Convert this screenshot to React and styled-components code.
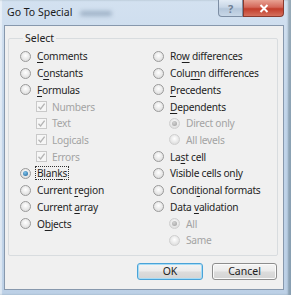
import React from "react";
import styled, { createGlobalStyle } from "styled-components";

const Global = createGlobalStyle`
  html, body { margin: 0; padding: 0; background: #2f4a4c; }
  * { box-sizing: border-box; }
`;

const Window = styled.div`
  width: 291px;
  height: 295px;
  display: flex;
  flex-direction: column;
  background: linear-gradient(180deg, #d3e1f0 0%, #c2d5ea 40%, #bcd0e6 100%);
  box-shadow: inset -3px 0 2px rgba(40, 70, 80, 0.35), inset 2px 0 1px rgba(255, 255, 255, 0.5);
  font-family: "Noto Sans", "Open Sans", sans-serif;
`;

const TitleBar = styled.div`
  height: 24px;
  display: flex;
  align-items: flex-start;
  padding-left: 7px;
`;

const Title = styled.div`
  font-size: 10.5px;
  line-height: 24px;
  color: #1b1b1b;
  flex: 1;
  display: flex;
  align-items: center;
  gap: 8px;
`;

const BlurredName = styled.span`
  width: 32px;
  height: 5px;
  margin-top: 3px;
  border-radius: 3px;
  background: #9eb1c6;
  filter: blur(2px);
`;

const Controls = styled.div`
  display: flex;
  margin-right: 7px;
`;

const CtrlButton = styled.div`
  width: ${(p) => p.$w}px;
  height: 17px;
  display: flex;
  align-items: center;
  justify-content: center;
  border: 1px solid ${(p) => (p.$close ? "#8a3a2e" : "#7d8ea4")};
  border-top: none;
  border-radius: ${(p) => (p.$close ? "0 0 4px 0" : "0 0 0 4px")};
  background: ${(p) =>
    p.$close
      ? "linear-gradient(180deg, #e8a293 0%, #d4685a 45%, #c23d2b 55%, #d5705d 100%)"
      : "linear-gradient(180deg, #e2ebf5 0%, #c8d6e6 45%, #b4c6da 55%, #c8d7e7 100%)"};
  color: ${(p) => (p.$close ? "#fff" : "#6f8095")};
  font-size: 11px;
  font-weight: 700;
`;

const Client = styled.div`
  flex: 1;
  margin: 1px 7px 5px 4px;
  border: 1px solid #8798ad;
  background: #f0f0f0;
  display: flex;
  flex-direction: column;
`;

const Group = styled.fieldset`
  margin: 5px 5px 0 3px;
  padding: 3px 0 6px 11px;
  border: 1px solid #d8dcdf;
  border-radius: 2px;
  min-width: 0;
`;

const Legend = styled.legend`
  margin-left: 3px;
  padding: 0 2px;
  font-size: 10.5px;
  line-height: 14px;
  color: #222;
`;

const Columns = styled.div`
  display: grid;
  grid-template-columns: 133px 1fr;
`;

const Column = styled.div`
  display: flex;
  flex-direction: column;
`;

const Row = styled.div`
  height: 16.73px;
  display: flex;
  align-items: center;
  padding-left: ${(p) => (p.$sub ? 16 : 0)}px;
  gap: ${(p) => (p.$check ? 4 : 5)}px;
  font-size: 10.2px;
  letter-spacing: -0.25px;
  color: ${(p) => (p.$disabled ? "#a3a3a3" : "#1f1f1f")};
  white-space: nowrap;
`;

const Radio = styled.span`
  width: 11px;
  height: 11px;
  flex: none;
  border-radius: 50%;
  border: 1px solid ${(p) => (p.$disabled ? "#cfcfcf" : "#9a9a9a")};
  background: radial-gradient(circle at 50% 40%, #ffffff 0%, #ececec 45%, #d4d4d4 100%);
  display: flex;
  align-items: center;
  justify-content: center;
  &::after {
    content: "";
    display: ${(p) => (p.$on ? "block" : "none")};
    width: 5px;
    height: 5px;
    border-radius: 50%;
    background: ${(p) =>
      p.$disabled
        ? "radial-gradient(circle at 40% 35%, #d2d2d2, #9c9c9c)"
        : "radial-gradient(circle at 40% 35%, #7fc3ec, #1b5f93)"};
  }
`;

const Check = styled.span`
  width: 11px;
  height: 11px;
  flex: none;
  border: 1px solid #c9c9c9;
  background: #f6f6f6;
  display: flex;
  align-items: center;
  justify-content: center;
`;

const Label = styled.span`
  padding: 0 1px;
  outline: ${(p) => (p.$focus ? "1px dotted #333" : "none")};
  outline-offset: 0;
  line-height: 12px;
`;

const Key = styled.u`
  text-decoration-thickness: 1px;
  text-underline-offset: 1.5px;
`;

const ButtonRow = styled.div`
  display: flex;
  justify-content: flex-end;
  gap: 9px;
  margin: 7px 6px 0 0;
`;

const Button = styled.div`
  width: ${(p) => p.$w}px;
  height: 17px;
  display: flex;
  align-items: center;
  justify-content: center;
  border: 1px solid ${(p) => (p.$default ? "#4aa3d8" : "#8d8d8d")};
  border-radius: 3px;
  background: linear-gradient(180deg, #f4f4f4 0%, #ebebeb 48%, #dcdcdc 52%, #d4d4d4 100%);
  box-shadow: ${(p) => (p.$default ? "inset 0 0 0 1px #a6dcf6" : "inset 0 0 0 1px #fbfbfb")};
  font-size: 10.5px;
  color: #1e1e1e;
`;

const CheckMark = () => (
  <svg width="9" height="9" viewBox="0 0 9 9">
    <path d="M1.5 4.8 L3.6 7 L7.6 1.6" fill="none" stroke="#b4b4b4" strokeWidth="1.3" />
  </svg>
);

function Text({ text, k }) {
  if (k === undefined) return text;
  return (
    <>
      {text.slice(0, k)}
      <Key>{text[k]}</Key>
      {text.slice(k + 1)}
    </>
  );
}

const leftItems = [
  { type: "radio", text: "Comments", k: 0 },
  { type: "radio", text: "Constants", k: 1 },
  { type: "radio", text: "Formulas", k: 0 },
  { type: "check", text: "Numbers", sub: true, disabled: true, on: true },
  { type: "check", text: "Text", sub: true, disabled: true, on: true },
  { type: "check", text: "Logicals", sub: true, disabled: true, on: true },
  { type: "check", text: "Errors", sub: true, disabled: true, on: true },
  { type: "radio", text: "Blanks", k: 4, on: true, focus: true },
  { type: "radio", text: "Current region", k: 8 },
  { type: "radio", text: "Current array", k: 8 },
  { type: "radio", text: "Objects", k: 1 },
];

const rightItems = [
  { type: "radio", text: "Row differences", k: 2 },
  { type: "radio", text: "Column differences", k: 4 },
  { type: "radio", text: "Precedents", k: 0 },
  { type: "radio", text: "Dependents", k: 0 },
  { type: "radio", text: "Direct only", sub: true, disabled: true, on: true },
  { type: "radio", text: "All levels", sub: true, disabled: true },
  { type: "radio", text: "Last cell", k: 2 },
  { type: "radio", text: "Visible cells only", k: 16 },
  { type: "radio", text: "Conditional formats", k: 5 },
  { type: "radio", text: "Data validation", k: 5 },
  { type: "radio", text: "All", sub: true, disabled: true, on: true },
  { type: "radio", text: "Same", sub: true, disabled: true },
];

function Item({ item }) {
  return (
    <Row $sub={item.sub} $disabled={item.disabled} $check={item.type === "check"}>
      {item.type === "check" ? (
        <Check>{item.on && <CheckMark />}</Check>
      ) : (
        <Radio $on={item.on} $disabled={item.disabled} />
      )}
      <Label $focus={item.focus}>
        <Text text={item.text} k={item.k} />
      </Label>
    </Row>
  );
}

export default function App() {
  return (
    <>
      <Global />
      <Window>
        <TitleBar>
          <Title>
            Go To Special
            <BlurredName />
          </Title>
          <Controls>
            <CtrlButton $w={25}>?</CtrlButton>
            <CtrlButton $w={41} $close>
              <svg width="10" height="9" viewBox="0 0 10 9">
                <path d="M1.5 1 L8.5 8 M8.5 1 L1.5 8" stroke="#fff" strokeWidth="2" />
              </svg>
            </CtrlButton>
          </Controls>
        </TitleBar>
        <Client>
          <Group>
            <Legend>Select</Legend>
            <Columns>
              <Column>
                {leftItems.map((it) => (
                  <Item key={it.text} item={it} />
                ))}
              </Column>
              <Column>
                {rightItems.map((it) => (
                  <Item key={it.text + (it.sub ? "s" : "")} item={it} />
                ))}
              </Column>
            </Columns>
          </Group>
          <ButtonRow>
            <Button $w={66} $default>OK</Button>
            <Button $w={65}>Cancel</Button>
          </ButtonRow>
        </Client>
      </Window>
    </>
  );
}
